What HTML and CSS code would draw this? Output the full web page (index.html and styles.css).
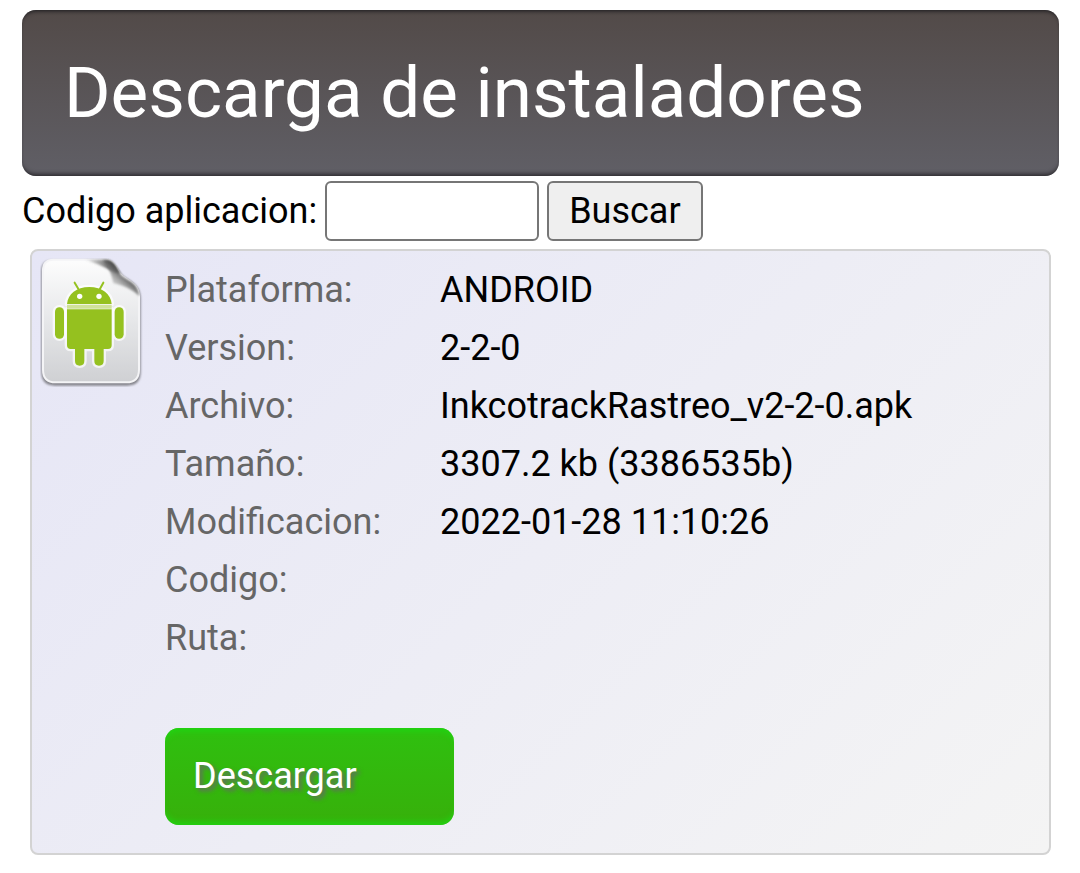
FILE: index.html
```html
<!DOCTYPE html>
<html lang="es">
<head>
    <meta charset="UTF-8">
    <meta name="viewport" content="width=device-width, initial-scale=1.0">
    <title>Descarga de instaladores</title>
    <link rel="stylesheet" href="styles.css">
</head>
<body>
    <header class="header">
        <h1>Descarga de instaladores</h1>
    </header>
    <form class="search" action="#" method="get">
        <label for="codigo">Codigo aplicacion:</label>
        <input type="text" id="codigo" name="codigo">
        <button type="submit">Buscar</button>
    </form>
    <main class="app">
        <svg class="app-icon" viewBox="30 20 309 390" aria-hidden="true">
            <defs>
                <linearGradient id="paper" x1="0" y1="0" x2="0" y2="1">
                    <stop offset="0" stop-color="#fdfdfd"/>
                    <stop offset="0.5" stop-color="#e6e7e9"/>
                    <stop offset="1" stop-color="#cfd0d3"/>
                </linearGradient>
                <linearGradient id="fold" gradientUnits="userSpaceOnUse" x1="238" y1="118" x2="284" y2="66">
                    <stop offset="0" stop-color="#888" stop-opacity="0"/>
                    <stop offset="0.5" stop-color="#999" stop-opacity="0.7"/>
                    <stop offset="1" stop-color="#3c3c3c"/>
                </linearGradient>
                <linearGradient id="foldTop" gradientUnits="userSpaceOnUse" x1="165" y1="60" x2="250" y2="40">
                    <stop offset="0" stop-color="#666" stop-opacity="0"/>
                    <stop offset="1" stop-color="#4c4c4c"/>
                </linearGradient>
                <filter id="soft" x="-10%" y="-10%" width="120%" height="120%">
                    <feGaussianBlur stdDeviation="3"/>
                </filter>
            </defs>
            <path d="M66 30H230C256 32 266 70 288 83C312 97 331 112 332 142V366Q332 406 292 406H74Q34 406 34 366V62Q34 30 66 30Z" fill="#85858c" filter="url(#soft)"/>
            <path d="M70 28H228C250 28 258 52 270 70C284 90 326 94 327 138V358Q327 396 289 396H77Q39 396 39 358V60Q39 28 70 28Z" fill="url(#paper)" stroke="#f4f4f6" stroke-width="6"/>
            <path d="M165 28H228C250 28 258 52 270 70C244 66 230 48 165 28Z" fill="url(#foldTop)" filter="url(#soft)"/>
            <path d="M218 30C250 28 258 52 270 70C284 90 326 94 328 138C307 116 277 105 250 98C244 72 236 48 218 30Z" fill="url(#fold)" filter="url(#soft)"/>
            <g fill="#95c11f" stroke="#fff" stroke-opacity="0.7" stroke-width="14" stroke-linejoin="round" paint-order="stroke">
                <rect x="75" y="171" width="27" height="94" rx="13"/>
                <rect x="254" y="171" width="27" height="94" rx="13"/>
                <path d="M111 177H245V285Q245 296 234 296H221V332Q221 346 207 346Q193 346 193 332V296H163V332Q163 346 149 346Q135 346 135 332V296H122Q111 296 111 285Z"/>
                <path d="M111 161C113 132 140 110 178 110S243 132 245 161Z"/>
            </g>
            <path d="M111 169H245" stroke="#cfe298" stroke-width="12"/>
            <path d="M134 97L147 119M220 97L208 119" stroke="#95c11f" stroke-width="6" stroke-linecap="round"/>
            <circle cx="149" cy="138" r="8" fill="#fff"/>
            <circle cx="207" cy="138" r="8" fill="#fff"/>
        </svg>
        <div class="app-body">
            <dl class="app-data">
                <dt>Plataforma:</dt>
                <dd>ANDROID</dd>
                <dt>Version:</dt>
                <dd>2-2-0</dd>
                <dt>Archivo:</dt>
                <dd>InkcotrackRastreo_v2-2-0.apk</dd>
                <dt>Tamaño:</dt>
                <dd>3307.2 kb (3386535b)</dd>
                <dt>Modificacion:</dt>
                <dd>2022-01-28 11:10:26</dd>
                <dt>Codigo:</dt>
                <dd></dd>
                <dt>Ruta:</dt>
                <dd></dd>
            </dl>
            <a class="download" href="#">Descargar</a>
        </div>
    </main>
</body>
</html>
```
FILE: styles.css
```css
body {
    margin: 10px 21px 10px 22px;
    font-family: Roboto, "Liberation Sans", sans-serif;
    font-size: 36px;
    color: #000;
    background-color: #fff;
}
.header {
    padding: 40px 42px;
    border-radius: 14px;
    background: linear-gradient(#524a48, #605f66);
    box-shadow: inset 0 4px 4px -3px #18181c, inset 0 -5px 4px -3px #2c2a2e;
}
.header h1 {
    margin: 0;
    font-size: 71px;
    font-weight: 400;
    line-height: 86px;
    color: #fff;
}
.search {
    display: flex;
    align-items: center;
    gap: 8px;
    margin: 5px 0 8px;
}
.search input,
.search button {
    height: 60px;
    box-sizing: border-box;
    border: 2px solid #767676;
    border-radius: 6px;
    font: inherit;
    color: #000;
}
.search input {
    width: 214px;
    padding: 0 6px;
    background-color: #fff;
}
.search button {
    padding: 0 20px;
    background-color: #efefef;
    cursor: pointer;
}
.app {
    display: flex;
    align-items: flex-start;
    gap: 22px;
    margin: 0 8px;
    padding: 6px 8px 28px;
    border: 2px solid #d3d3d3;
    border-radius: 8px;
    background: linear-gradient(135deg, #e6e6f6, #f4f4f4);
}
.app-icon {
    flex: none;
    width: 103px;
    height: 130px;
}
.app-body {
    flex: 1;
}
.app-data {
    display: grid;
    grid-template-columns: 275px 1fr;
    grid-auto-rows: 58px;
    align-items: center;
    margin: 4px 0 61px;
}
.app-data dt {
    color: #666;
}
.app-data dd {
    margin: 0;
}
.download {
    display: block;
    width: 289px;
    box-sizing: border-box;
    padding: 28px;
    border-radius: 14px;
    line-height: 41px;
    color: #fff;
    text-decoration: none;
    text-shadow: 3px 3px 4px #666;
    background: linear-gradient(#2fc00f, #37b00b);
    box-shadow: inset 0 7px 6px -4px #1fd512, inset 0 -7px 6px -4px #1fd512;
}
```
